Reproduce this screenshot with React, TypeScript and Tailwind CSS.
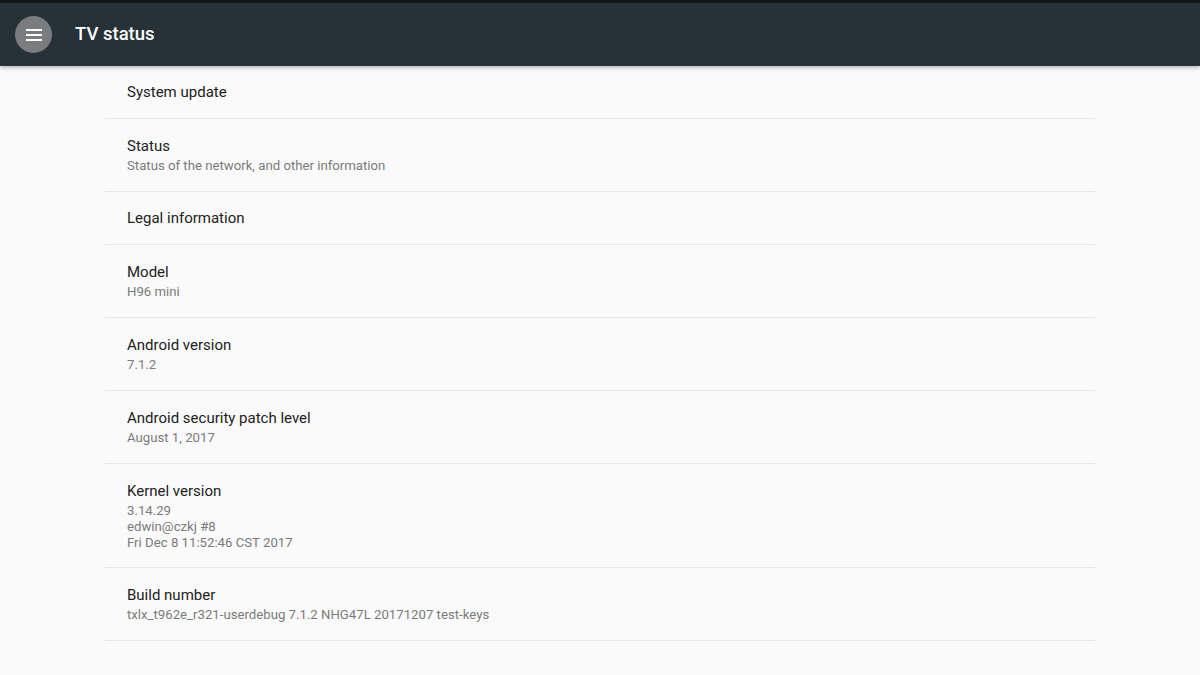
const ROWS: { title: string; lines?: string[] }[] = [
  { title: "System update" },
  { title: "Status", lines: ["Status of the network, and other information"] },
  { title: "Legal information" },
  { title: "Model", lines: ["H96 mini"] },
  { title: "Android version", lines: ["7.1.2"] },
  { title: "Android security patch level", lines: ["August 1, 2017"] },
  { title: "Kernel version", lines: ["3.14.29", "edwin@czkj #8", "Fri Dec 8 11:52:46 CST 2017"] },
  { title: "Build number", lines: ["txlx_t962e_r321-userdebug 7.1.2 NHG47L 20171207 test-keys"] },
];

export default function App() {
  return (
    <div className="w-[1200px] h-[675px] overflow-hidden bg-[#fafafa]" style={{ fontFamily: "Roboto, 'Noto Sans', sans-serif" }}>
      {/* Toolbar */}
      <div className="border-t-[3px] border-[#121617] bg-[#263237] h-[66px] flex items-center shadow-[0_2px_4px_rgba(0,0,0,0.25)] relative">
        <div className="ml-[15px] w-[37px] h-[37px] rounded-full bg-[#7a7c7d] flex items-center justify-center">
          <svg width="16" height="12" viewBox="0 0 16 12">
            <rect x="0" y="0" width="16" height="2" fill="#fff" />
            <rect x="0" y="5" width="16" height="2" fill="#fff" />
            <rect x="0" y="10" width="16" height="2" fill="#fff" />
          </svg>
        </div>
        <h1 className="ml-[23px] text-[18.5px] font-medium text-white">TV status</h1>
      </div>

      {/* List */}
      <div className="ml-[105px] w-[990px]">
        {ROWS.map(r => (
          <div
            key={r.title}
            className={`border-b border-[#e4e6ea] px-[22px] ${
              !r.lines ? "py-[16px]" : r.lines.length > 1 ? "pt-[17px] pb-[16px]" : "pt-[17px] pb-[17px]"
            }`}
          >
            <div className="text-[15px] leading-[20px] text-[#222]">{r.title}</div>
            {r.lines && (
              <div className="mt-[2px] text-[13.2px] leading-[16px] text-[#7a7a7a]">
                {r.lines.map(l => <div key={l}>{l}</div>)}
              </div>
            )}
          </div>
        ))}
      </div>
    </div>
  );
}
